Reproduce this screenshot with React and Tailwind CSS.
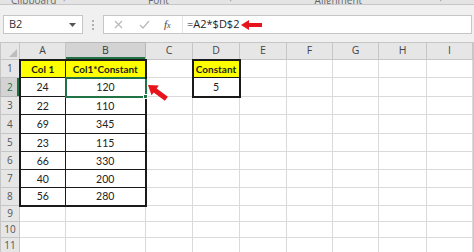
import React from "react";

const cols = ["A", "B", "C", "D", "E", "F", "G", "H", "I"];
const rows = [
  { n: 1, h: "h-[18px]", a: "Col 1", b: "Col1*Constant", d: "Constant" },
  { n: 2, h: "h-[19px]", a: "24", b: "120", d: "5" },
  { n: 3, h: "h-[18px]", a: "22", b: "110" },
  { n: 4, h: "h-[19px]", a: "69", b: "345" },
  { n: 5, h: "h-[18px]", a: "23", b: "115" },
  { n: 6, h: "h-[18px]", a: "66", b: "330" },
  { n: 7, h: "h-[18px]", a: "40", b: "200" },
  { n: 8, h: "h-[18px]", a: "56", b: "280" },
  { n: 9, h: "h-[16px]" },
  { n: 10, h: "h-[15px]" },
  { n: 11, h: "h-[16px]" },
];

function cellClass(r, c) {
  const base = "p-0 text-center align-middle leading-none";
  if (c === "A" && r.n <= 8) {
    let cls = base + " border border-[#1a1a1a] border-l-2";
    if (r.n === 1) cls += " border-t-2 bg-[#ffff00] font-bold text-[10px]";
    if (r.n === 8) cls += " border-b-2";
    return cls;
  }
  if (c === "B" && r.n <= 8) {
    if (r.n === 2) return base + " relative border-2 border-[#217346]";
    let cls = base + " border border-[#1a1a1a] border-r-2";
    if (r.n === 1) cls += " border-t-2 bg-[#ffff00] font-bold text-[10px]";
    if (r.n === 8) cls += " border-b-2";
    return cls;
  }
  if (c === "D" && r.n === 1)
    return base + " border-2 border-b border-[#1a1a1a] bg-[#ffff00] font-bold text-[10px]";
  if (c === "D" && r.n === 2)
    return base + " border-2 border-t border-[#1a1a1a]";
  return base + " border border-[#dadada]";
}

function cellText(r, c) {
  if (c === "A") return r.a || "";
  if (c === "B") return r.b || "";
  if (c === "D") return r.d || "";
  return "";
}

function LeftArrow() {
  return (
    <svg width="21" height="10" viewBox="0 0 21 10" className="block">
      <polygon points="0,5 8,0 8,3 21,3 21,7 8,7 8,10" fill="#e8141b" />
    </svg>
  );
}

export default function App() {
  return (
    <div className="relative w-[474px] h-[252px] overflow-hidden bg-[#f0f0f0] font-['Open_Sans',sans-serif]">
      {/* ribbon group labels (cut off at the top, as in the screenshot) */}
      <div className="relative h-[5px] overflow-hidden bg-[#e4e4e4] border-b border-[#c6c6c6] text-[10px] text-[#666] leading-none">
        <div className="flex items-start -mt-[5px]">
          <span className="ml-[11px]">Clipboard</span>
          <span className="ml-[7px] text-[8px]">⌐</span>
          <span className="ml-[80px]">Font</span>
          <span className="ml-[61px] text-[8px]">⌐</span>
          <span className="ml-[80px]">Alignment</span>
          <span className="ml-[78px] text-[8px]">⌐</span>
        </div>
      </div>

      {/* formula bar */}
      <div className="h-[37px] flex items-start pt-[10px] pr-[2px]">
        <div className="ml-[3px] w-[80px] h-[19px] bg-white border border-[#c6c6c6] flex items-center justify-between pl-[5px] pr-[6px] text-[11px] text-[#333]">
          <span>B2</span>
          <svg width="7" height="4" viewBox="0 0 7 4">
            <polygon points="0,0 7,0 3.5,4" fill="#555" />
          </svg>
        </div>
        <div className="w-[20px] h-[19px] flex flex-col items-center justify-center gap-[2px]">
          <span className="w-[2px] h-[2px] bg-[#b0b0b0]"></span>
          <span className="w-[2px] h-[2px] bg-[#b0b0b0]"></span>
          <span className="w-[2px] h-[2px] bg-[#b0b0b0]"></span>
        </div>
        <div className="flex-1 h-[19px] bg-white border border-[#c6c6c6] flex items-center">
          <div className="w-[79px] h-full flex items-center border-r border-[#e4e4e4]">
            <svg width="9" height="9" viewBox="0 0 9 9" className="ml-[10px]">
              <path d="M1 1 L8 8 M8 1 L1 8" stroke="#b8b8b8" strokeWidth="1.2" fill="none" />
            </svg>
            <svg width="11" height="9" viewBox="0 0 11 9" className="ml-[16px]">
              <path d="M1 5 L4 8 L10 1" stroke="#b8b8b8" strokeWidth="1.2" fill="none" />
            </svg>
            <span className="ml-[14px] text-[11px] italic text-[#444] font-['Liberation_Serif',serif]">
              f<span className="text-[8px]">x</span>
            </span>
          </div>
          <span className="ml-[4px] text-[11px] text-[#222]">=A2*$D$2</span>
          <span className="ml-[2px]">
            <LeftArrow />
          </span>
        </div>
      </div>

      {/* grid */}
      <div className="bg-[#c8c8c8] h-[210px]">
        <table className="table-fixed border-collapse w-[472px] bg-white font-['Lato',sans-serif] text-[10.5px] text-[#222]">
          <colgroup>
            <col className="w-[19px]" />
            <col className="w-[46px]" />
            <col className="w-[80px]" />
            <col className="w-[47px]" />
            <col className="w-[47px]" />
            <col className="w-[47px]" />
            <col className="w-[46px]" />
            <col className="w-[46px]" />
            <col className="w-[48px]" />
            <col className="w-[46px]" />
          </colgroup>
          <thead>
            <tr className="h-[16px]">
              <th className="p-0 relative bg-[#e6e6e6] border border-[#c6c6c6]">
                <svg width="8" height="8" viewBox="0 0 8 8" className="absolute right-[2px] bottom-[2px]">
                  <polygon points="8,0 8,8 0,8" fill="#bdbdbd" />
                </svg>
              </th>
              {cols.map((c) =>
                c === "B" ? (
                  <th
                    key={c}
                    className="p-0 font-normal text-[10.5px] text-[#3a3a3a] font-['Open_Sans',sans-serif] bg-[#d3d3d3] border border-[#b8b8b8] shadow-[inset_0_-2px_0_#217346]"
                  >
                    {c}
                  </th>
                ) : (
                  <th
                    key={c}
                    className="p-0 font-normal text-[10.5px] text-[#444] font-['Open_Sans',sans-serif] bg-[#e6e6e6] border border-[#c6c6c6]"
                  >
                    {c}
                  </th>
                )
              )}
            </tr>
          </thead>
          <tbody>
            {rows.map((r) => (
              <tr key={r.n} className={r.h}>
                {r.n === 2 ? (
                  <td className="p-0 text-center text-[10px] text-[#217346] font-['Open_Sans',sans-serif] bg-[#d3d3d3] border border-[#b8b8b8] shadow-[inset_-2px_0_0_#217346]">
                    {r.n}
                  </td>
                ) : (
                  <td className="p-0 text-center text-[10px] text-[#555] font-['Open_Sans',sans-serif] bg-[#e6e6e6] border border-[#c6c6c6]">
                    {r.n}
                  </td>
                )}
                {cols.map((c) => (
                  <td key={c} className={cellClass(r, c)}>
                    {cellText(r, c)}
                    {r.n === 2 && c === "B" ? (
                      <span className="absolute -right-[3px] -bottom-[3px] w-[5px] h-[5px] bg-[#217346] border border-white"></span>
                    ) : null}
                  </td>
                ))}
              </tr>
            ))}
          </tbody>
        </table>
      </div>

      {/* red diagonal arrow pointing at B2 */}
      <svg width="32" height="26" viewBox="0 0 32 26" className="absolute left-[143px] top-[79px]">
        <g transform="translate(5,6) rotate(37) translate(0,-6)">
          <polygon points="0,6 9,0 9,3.5 23,3.5 23,8.5 9,8.5 9,12" fill="#e8141b" />
        </g>
      </svg>
    </div>
  );
}
